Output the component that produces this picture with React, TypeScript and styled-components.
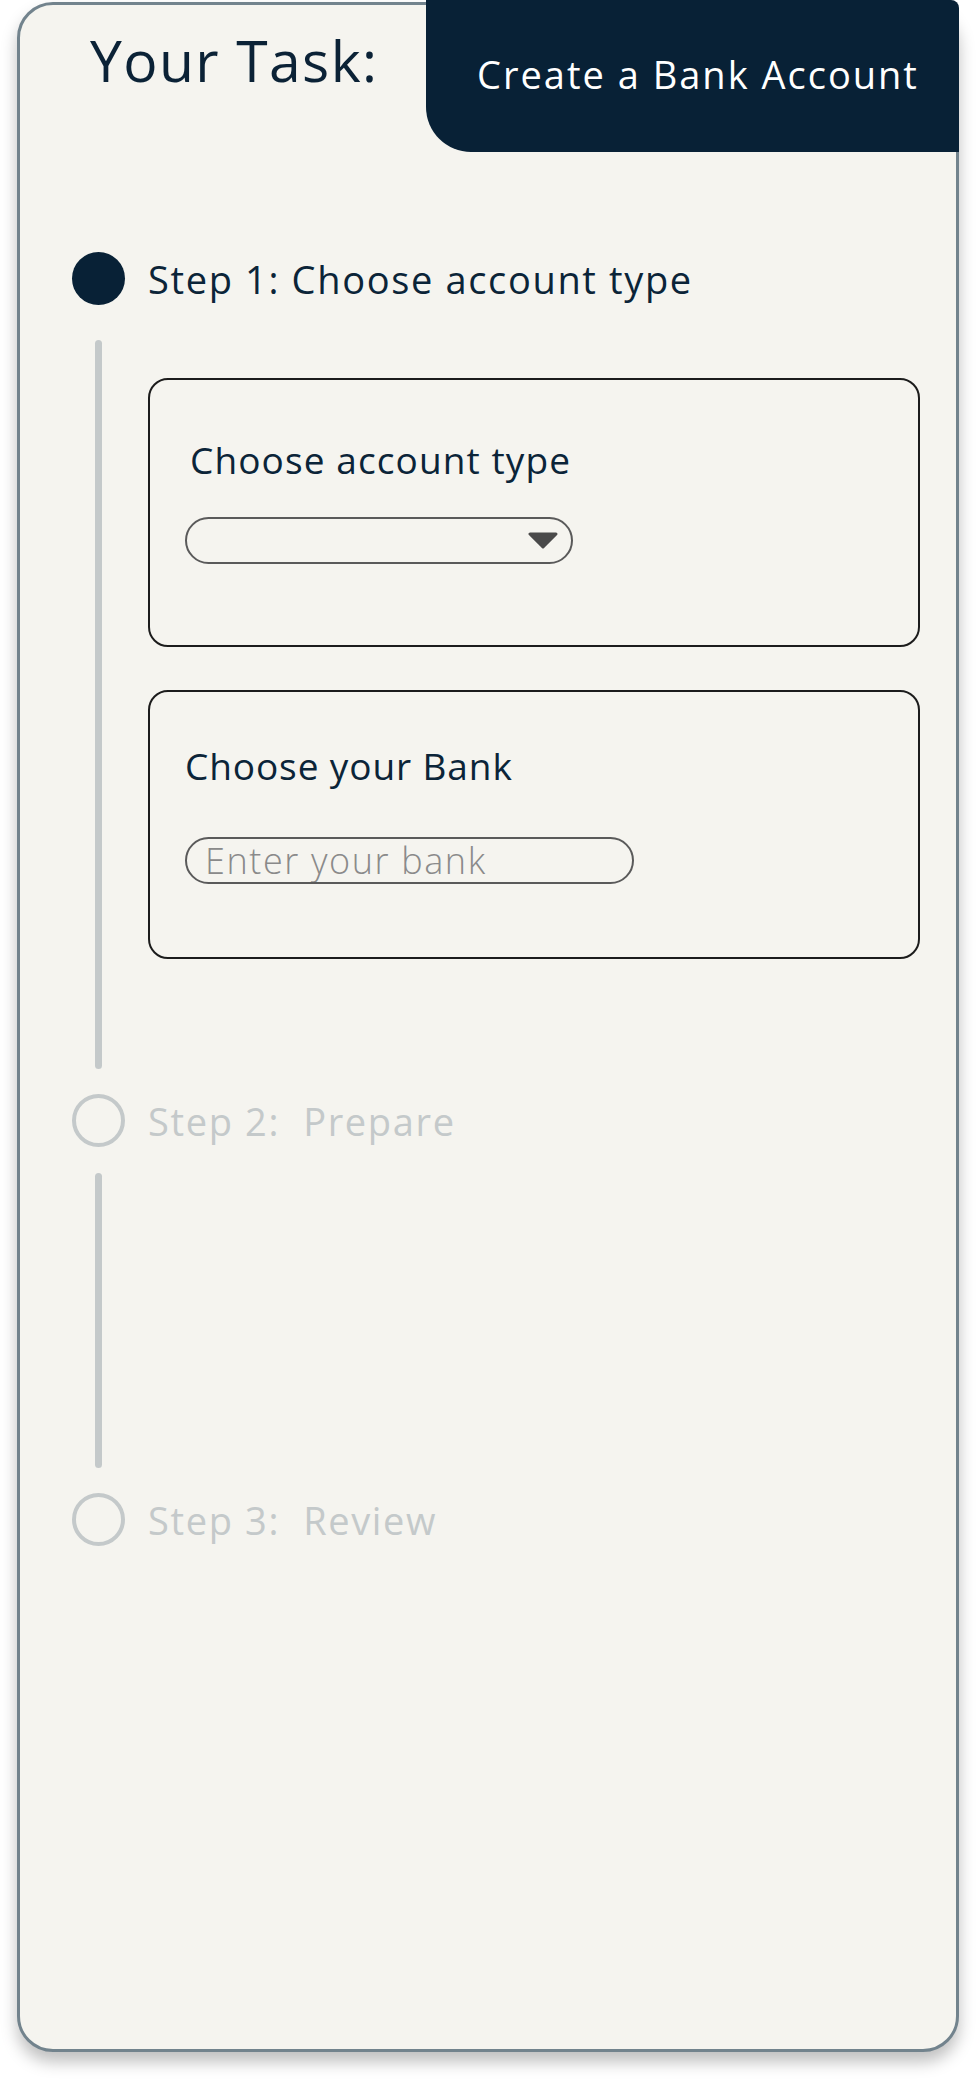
import styled, { createGlobalStyle } from 'styled-components';

const GlobalStyle = createGlobalStyle`
  body {
    margin: 0;
    background: #ffffff;
    font-family: "Open Sans", Lato, sans-serif;
  }
`;

const navy = '#082136';
const muted = '#c4c9ca';

type StepInfo = {
  title: string;
  active: boolean;
};

const steps: StepInfo[] = [
  { title: 'Step 1: Choose account type', active: true },
  { title: 'Step 2:  Prepare', active: false },
  { title: 'Step 3:  Review', active: false },
];

export default function App() {
  return (
    <>
      <GlobalStyle />
      <Page>
        <Card>
          <Header>
            <Title>Your Task:</Title>
            <TaskTab>Create a Bank Account</TaskTab>
          </Header>

          <Timeline>
            <StepRow>
              <Dot $active={steps[0].active} />
              <StepTitle $active={steps[0].active}>{steps[0].title}</StepTitle>
            </StepRow>
            <StepBody>
              <Rail>
                <RailLine $top={35} $bottom={25} />
              </Rail>
              <StepContent>
                <FieldBox $padTop={61}>
                  <FieldLabel $indent={5} $spacing={1.1}>
                    Choose account type
                  </FieldLabel>
                  <SelectBox $gap={39}>
                    <svg width="30" height="17" viewBox="0 0 30 17">
                      <path
                        d="M2 2 L28 2 L15 15 Z"
                        fill="#4a4a4a"
                        stroke="#4a4a4a"
                        strokeWidth="3"
                        strokeLinejoin="round"
                      />
                    </svg>
                  </SelectBox>
                </FieldBox>
                <FieldBox $padTop={55}>
                  <FieldLabel $indent={0} $spacing={0.9}>
                    Choose your Bank
                  </FieldLabel>
                  <TextInput $gap={53} placeholder="Enter your bank" />
                </FieldBox>
              </StepContent>
            </StepBody>

            <StepRow>
              <Dot $active={steps[1].active} />
              <StepTitle $active={steps[1].active}>{steps[1].title}</StepTitle>
            </StepRow>
            <StepBody $minHeight={346}>
              <Rail>
                <RailLine $top={26} $bottom={25} />
              </Rail>
            </StepBody>

            <StepRow>
              <Dot $active={steps[2].active} />
              <StepTitle $active={steps[2].active}>{steps[2].title}</StepTitle>
            </StepRow>
          </Timeline>
        </Card>
      </Page>
    </>
  );
}

const Page = styled.div`
  padding: 2px 17px 36px;
`;

const Card = styled.div`
  box-sizing: border-box;
  height: 2050px;
  background: #f5f4ef;
  border: 3px solid #72838d;
  border-radius: 36px;
  box-shadow: 0 10px 16px rgba(0, 0, 0, 0.25);
`;

const Header = styled.div`
  display: flex;
  justify-content: space-between;
  align-items: flex-start;
  margin: -5px -3px 0 0;
`;

const Title = styled.h1`
  margin: 0;
  padding: 32px 0 0 70px;
  font-size: 57px;
  line-height: 1;
  font-weight: 500;
  letter-spacing: 1.4px;
  color: #0b2236;
`;

const TaskTab = styled.div`
  box-sizing: border-box;
  width: 533px;
  height: 152px;
  padding: 55px 0 0 51px;
  background: ${navy};
  border-radius: 0 8px 0 45px;
  color: #ffffff;
  font-size: 38px;
  font-weight: 500;
  line-height: 1;
  letter-spacing: 2px;
  white-space: nowrap;
`;

const Timeline = styled.div`
  display: flex;
  flex-direction: column;
  margin-top: 100px;
`;

const StepRow = styled.div`
  display: flex;
  align-items: center;
  gap: 23px;
  padding-left: 52px;
`;

const Dot = styled.div<{ $active: boolean }>`
  box-sizing: border-box;
  flex: none;
  width: 53px;
  height: 53px;
  border-radius: 50%;
  background: ${(p) => (p.$active ? navy : 'transparent')};
  border: ${(p) => (p.$active ? 'none' : `4px solid ${muted}`)};
`;

const StepTitle = styled.div<{ $active: boolean }>`
  font-size: 38px;
  font-weight: 500;
  line-height: 1;
  letter-spacing: 1.65px;
  white-space: pre;
  color: ${(p) => (p.$active ? '#0b2438' : muted)};
`;

const StepBody = styled.div<{ $minHeight?: number }>`
  display: flex;
  min-height: ${(p) => p.$minHeight ?? 0}px;
`;

const Rail = styled.div`
  flex: none;
  display: flex;
  justify-content: center;
  width: 53px;
  margin-left: 52px;
`;

const RailLine = styled.div<{ $top: number; $bottom: number }>`
  width: 7px;
  margin: ${(p) => p.$top}px 0 ${(p) => p.$bottom}px;
  border-radius: 4px;
  background: ${muted};
`;

const StepContent = styled.div`
  flex: 1;
  display: flex;
  flex-direction: column;
  gap: 43px;
  margin: 0 36px 0 23px;
  padding: 73px 0 135px;
`;

const FieldBox = styled.div<{ $padTop: number }>`
  box-sizing: border-box;
  height: 269px;
  padding: ${(p) => p.$padTop}px 0 0 35px;
  border: 2px solid #1c1c1c;
  border-radius: 20px;
`;

const FieldLabel = styled.div<{ $indent: number; $spacing: number }>`
  padding-left: ${(p) => p.$indent}px;
  font-size: 37px;
  font-weight: 500;
  line-height: 1;
  letter-spacing: ${(p) => p.$spacing}px;
  color: #0b2438;
`;

const SelectBox = styled.div<{ $gap: number }>`
  box-sizing: border-box;
  display: flex;
  align-items: center;
  justify-content: flex-end;
  width: 388px;
  height: 47px;
  margin-top: ${(p) => p.$gap}px;
  padding-right: 13px;
  border: 2px solid #5a5a5a;
  border-radius: 24px;
`;

const TextInput = styled.input<{ $gap: number }>`
  box-sizing: border-box;
  display: block;
  width: 449px;
  height: 47px;
  margin-top: ${(p) => p.$gap}px;
  padding: 0 0 0 18px;
  border: 2px solid #5a5a5a;
  border-radius: 24px;
  background: transparent;
  font-family: "Open Sans", Lato, sans-serif;
  font-size: 36px;
  font-weight: 300;
  letter-spacing: 1.6px;
  color: #555555;
  outline: none;

  &::placeholder {
    color: #8a8a8a;
  }
`;
